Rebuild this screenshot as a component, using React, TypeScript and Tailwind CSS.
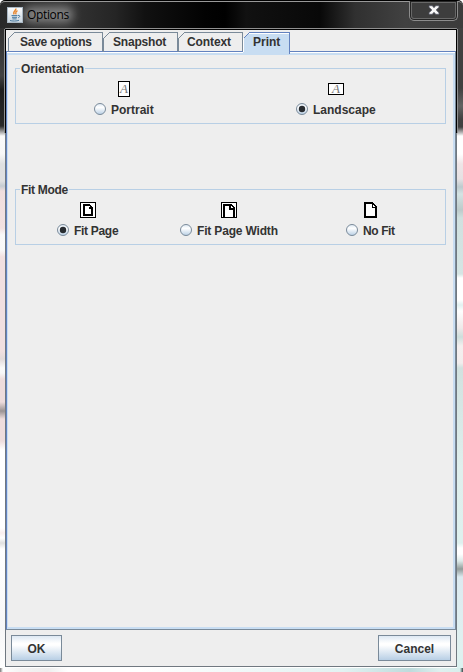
import React from "react";

function Java() {
  return (
    <svg width="16" height="16" viewBox="0 0 16 16" className="relative top-px ml-[7px] shrink-0">
      <defs>
        <linearGradient id="javaBg" x1="0" y1="0" x2="0" y2="1">
          <stop offset="0" stopColor="#fdfdfd" />
          <stop offset="1" stopColor="#c9d5df" />
        </linearGradient>
      </defs>
      <rect x=".5" y=".5" width="15" height="15" fill="url(#javaBg)" stroke="#aab8c4" />
      <path d="M8.8 1.5c.8 2-3.6 2.9-1.6 5.8M10.5 3.6c-2.7 1.3-1.4 2-1.7 3.7" fill="none" stroke="#e8872f" strokeWidth="1.4" />
      <path d="M4.5 8.6h6M5 10.3h5M5.4 11.9h4.2M3 13.5c2 .8 7 .7 9-.2M11 8.4c2.5-.4 2.2 1.7.2 2.3" fill="none" stroke="#47789e" strokeWidth="1" />
    </svg>
  );
}

function Tab({ label, className, on = false }: { label: string; className: string; on?: boolean }) {
  const edge = on ? "#6382bf" : "#7a8a99";
  return (
    <div
      className={`relative shrink-0 border-t border-r pt-px leading-[16px] whitespace-pre ${
        on ? "h-[22px] border-[#6382bf] bg-[#c8ddf2]" : "h-[19px] border-[#7a8a99] bg-[#eeeeee]"
      } ${className}`}
    >
      {label}
      <svg className="absolute -top-px left-0" width="7" height="20" viewBox="0 0 7 20" shapeRendering="crispEdges">
        <path d="M0 0h6v1L1 6H0z" fill="#eeeeee" />
        <path d="M5 1h1v1H5zM4 2h1v1H4zM3 3h1v1H3zM2 4h1v1H2zM1 5h1v1H1z" fill={edge} />
        <path d="M0 6h1v14H0z" fill={on ? "#ffffff" : edge} />
      </svg>
      {on && <div className="absolute top-0 right-0 left-[6px] h-px bg-white" />}
    </div>
  );
}

function Radio({ on = false }: { on?: boolean }) {
  return (
    <svg width="12" height="12" viewBox="0 0 12 12" className="shrink-0">
      <defs>
        <linearGradient id="radioFill" x1="0" y1="0" x2="0" y2="1">
          <stop offset="0" stopColor="#dbe7f2" />
          <stop offset=".35" stopColor="#ffffff" />
          <stop offset="1" stopColor="#b8cfe5" />
        </linearGradient>
      </defs>
      <circle cx="6" cy="6" r="5.5" fill="url(#radioFill)" stroke="#7a8a99" />
      {on && <circle cx="6" cy="6" r="3.2" fill="#282c30" />}
    </svg>
  );
}

function Orient({ wide = false }: { wide?: boolean }) {
  return (
    <div
      className={`flex items-center justify-center border border-black bg-white font-['Liberation_Serif',serif] text-[13px] leading-[10px] font-normal text-[#777777] italic ${
        wide ? "h-[12px] w-[16px]" : "h-[16px] w-[12px]"
      }`}
    >
      A
    </div>
  );
}

function PageIcon({ kind }: { kind: "page" | "width" | "none" }) {
  return (
    <svg width="16" height="16" viewBox="0 0 16 16" shapeRendering="crispEdges">
      {kind !== "none" && <path d="M.5 .5h15v15H.5z" fill="#ffffff" stroke="#000000" />}
      {kind === "page" && (
        <>
          <path d="M3 2h7v1h1v1h1v1h1v9H3z" fill="#000000" />
          <path d="M5 4h4v3h2v5H5z" fill="#ffffff" />
          <path d="M9 4h1v1H9z" fill="#ffffff" />
        </>
      )}
      {kind === "width" && (
        <>
          <path d="M2 2h9v1h1v1h1v1h1v10H2z" fill="#000000" />
          <path d="M4 4h4v4h4v7H4z" fill="#ffffff" />
          <path d="M10 4h1v1h1v1h-2z" fill="#ffffff" />
        </>
      )}
      {kind === "none" && (
        <>
          <path d="M1 0h9v1h1v1h1v1h1v1h1v12H1z" fill="#000000" />
          <path d="M3 2h6v4h3v8H3z" fill="#ffffff" />
          <path d="M10 3h1v1h1v1h-2z" fill="#ffffff" />
        </>
      )}
    </svg>
  );
}

function Choice({ label, on, className, iconClass, children }: { label: string; on?: boolean; className: string; iconClass: string; children: React.ReactNode }) {
  return (
    <div className={`shrink-0 ${className}`}>
      <div className={iconClass}>{children}</div>
      <div className="mt-[6px] flex h-[12px] items-center gap-[5px] whitespace-pre">
        <Radio on={on} />
        <span className="relative top-px leading-[14px]">{label}</span>
      </div>
    </div>
  );
}

function Group({ title, className, titleClass, children }: { title: string; className: string; titleClass: string; children: React.ReactNode }) {
  return (
    <section className={`relative flex h-[56px] w-[431px] border border-[#b8cfe5] ${className}`}>
      <h2 className={`absolute -top-[7px] left-[4px] bg-[#eeeeee] px-px leading-[14px] whitespace-pre ${titleClass}`}>{title}</h2>
      {children}
    </section>
  );
}

function Button({ label, className }: { label: string; className: string }) {
  return (
    <button
      className={`h-[26px] border border-[#7a8a99] bg-[linear-gradient(180deg,#dde8f3_0%,#ffffff_30%,#ffffff_38%,#b8cfe5_100%)] pt-px ${className}`}
    >
      {label}
    </button>
  );
}

export default function App() {
  return (
    <div className="relative flex h-[672px] w-[463px] flex-col overflow-hidden bg-white font-['Liberation_Sans',Arial,sans-serif] text-[12px] font-bold text-[#333333]">
      <div className="absolute top-[28px] left-0 h-[644px] w-[5px] bg-[linear-gradient(180deg,#303030_0,#424242_48px,#1d1d1d_62px,#2a2a2a_98px,#fafafa_108px,#f7f7f7_126px,#dfe0e1_136px,#e0e0e1_153px,#c5ccd2_158px,#f0dede_163px,#f2e1e1_200px,#f9f9f9_207px,#f8f8f8_222px,#f1e0e0_229px,#f1e0e0_323px,#e2dada_331px,#fafafa_340px,#f7f7f7_345px,#eddcdc_351px,#eddcdc_374px,#9a9393_383px,#eedddd_391px,#eedddd_413px,#ffffff_422px,#ffffff_500px,#f9eeee_505px,#ffffff_510px,#dfdfdf_515px,#ffffff_521px,#f7f7f7_600px,#ffffff_644px)]" />
      <div className="absolute top-[28px] left-[457px] h-[644px] w-[6px] bg-[linear-gradient(180deg,#404040_0,#404040_60px,#636363_78px,#414141_91px,#404040_99px,#ffffff_108px,#ffffff_126px,#eee5e7_136px,#e5e1e3_151px,#bdcace_159px,#d4e3e3_166px,#bccaca_182px,#d0e0df_190px,#d5e5e4_246px,#ffffff_250px,#ffffff_272px,#e1f1f1_277px,#fefefe_283px,#eee9e9_300px,#cddedc_309px,#f4efef_318px,#f2eded_335px,#d1e1df_340px,#dfefed_440px,#def0ee_515px,#ffffff_520px,#ffffff_526px,#dce9e8_533px,#929c9a_541px,#dceaf0_549px,#e0f1f0_620px,#daf2f0_644px)]" />
      <div className="absolute top-[668px] left-0 h-[4px] w-full bg-[linear-gradient(90deg,#777777_0,#ffffff_3px,#f4f4f4_20px,#eeeeee_48px,#ffffff_68px,#ffffff_140px,#e2f2f2_343px,#bedbdc_410px,#dff0ef_440px,#d7eeec_460px,#334444_463px)]" />

      <header className="relative flex h-[28px] shrink-0 items-center rounded-t-[5px] bg-[linear-gradient(90deg,#292929_0,#363636_60px,#252525_115px,#111111_145px,#020202_205px,#000000_225px,#111111_246px,#080808_320px,#303030_355px,#414141_405px,#3c3c3c_463px)]">
        <div className="absolute inset-x-0 top-0 h-[12px] rounded-t-[6px] border-t border-black" />
        <div className="absolute inset-x-0 top-px h-[12px] rounded-t-[5px] border-t border-[#989898]" />
        <div className="absolute top-[7px] left-[24px] h-[15px] w-[49px] rounded-[6px] bg-[#a0a0a0] opacity-75 blur-[5px]" />
        <Java />
        <span className="relative top-px ml-[4px] font-['Open_Sans','Noto_Sans',sans-serif] text-[12px] font-normal tracking-[-0.35px] text-black">Options</span>
        <div className="absolute top-px left-[409px] flex h-[20px] w-[49px] items-center justify-center rounded-b-[5px] border border-t-0 border-[#8c8c8c] bg-[#3d3d3d] shadow-[inset_0_0_0_1px_#252525,inset_0_0_0_2px_#686868]">
          <svg width="12" height="10" viewBox="0 0 12 10" className="relative -top-px">
            <path d="M1 .7h3.3L6 2.7 7.7.7H11v1.5L8.2 5 11 7.8v1.5H7.7L6 7.3l-1.7 2H1V7.8L3.8 5 1 2.2z" fill="#f7f7f7" stroke="#535666" strokeWidth=".8" />
          </svg>
        </div>
      </header>

      <main className="relative ml-[5px] h-[639px] w-[452px] shrink-0 border border-[#707880] border-t-[#909090] bg-[#eeeeee]">
        <div className="absolute top-0 -left-px h-px w-[452px] bg-black" />
        <div className="absolute top-0 -left-px h-[104px] w-px bg-black" />
        <div className="absolute top-0 -right-px h-[104px] w-px bg-black" />
        <div className="absolute top-0 -left-[2px] h-[104px] w-px bg-[#909090]" />
        <div className="absolute top-0 -right-[2px] h-[104px] w-px bg-[#909090]" />
        <nav className="relative z-10 flex h-[22px] items-start pt-[3px] pl-[2px]">
          <Tab label="Save options" className="w-[95px] pl-[12px] tracking-[-0.25px]" />
          <Tab label="Snapshot" className="w-[75px] pl-[10px] tracking-[-0.2px]" />
          <Tab label="Context" className="w-[65px] pl-[9px] tracking-[-0.1px]" />
          <Tab label="Print" on className="w-[47px] pl-[10px]" />
        </nav>
        <div className="h-[579px] w-[450px] border border-[#6382bf] border-r-[#7a8a99] border-b-[#7a8a99]">
          <div className="h-[577px] border-t border-white">
            <div className="h-[576px] border-2 border-l-1 border-[#c8ddf2]">
              <Group title="Orientation" className="mt-[13px] ml-[7px]" titleClass="tracking-[-0.1px]">
                <Choice label="Portrait" className="mt-[12px] ml-[78px] w-[202px]" iconClass="ml-[24px] h-[16px]">
                  <Orient />
                </Choice>
                <Choice label="Landscape" on className="mt-[12px] w-[90px]" iconClass="ml-[32px] h-[16px] pt-[2px]">
                  <Orient wide />
                </Choice>
              </Group>
              <Group title="Fit Mode" className="mt-[65px] ml-[7px]" titleClass="tracking-[-0.3px]">
                <Choice label="Fit Page" on className="mt-[12px] ml-[41px] w-[123px] tracking-[-0.3px]" iconClass="ml-[23px] h-[16px]">
                  <PageIcon kind="page" />
                </Choice>
                <Choice label="Fit Page Width" className="mt-[12px] w-[166px] tracking-[-0.17px]" iconClass="ml-[41px] h-[16px]">
                  <PageIcon kind="width" />
                </Choice>
                <Choice label="No Fit" className="mt-[12px] w-[60px] tracking-[-0.4px]" iconClass="ml-[17px] h-[16px]">
                  <PageIcon kind="none" />
                </Choice>
              </Group>
            </div>
          </div>
        </div>
        <footer className="flex justify-between pt-[5px] pr-[5px] pl-[5px]">
          <Button label="OK" className="w-[51px]" />
          <Button label="Cancel" className="w-[73px]" />
        </footer>
      </main>
    </div>
  );
}
